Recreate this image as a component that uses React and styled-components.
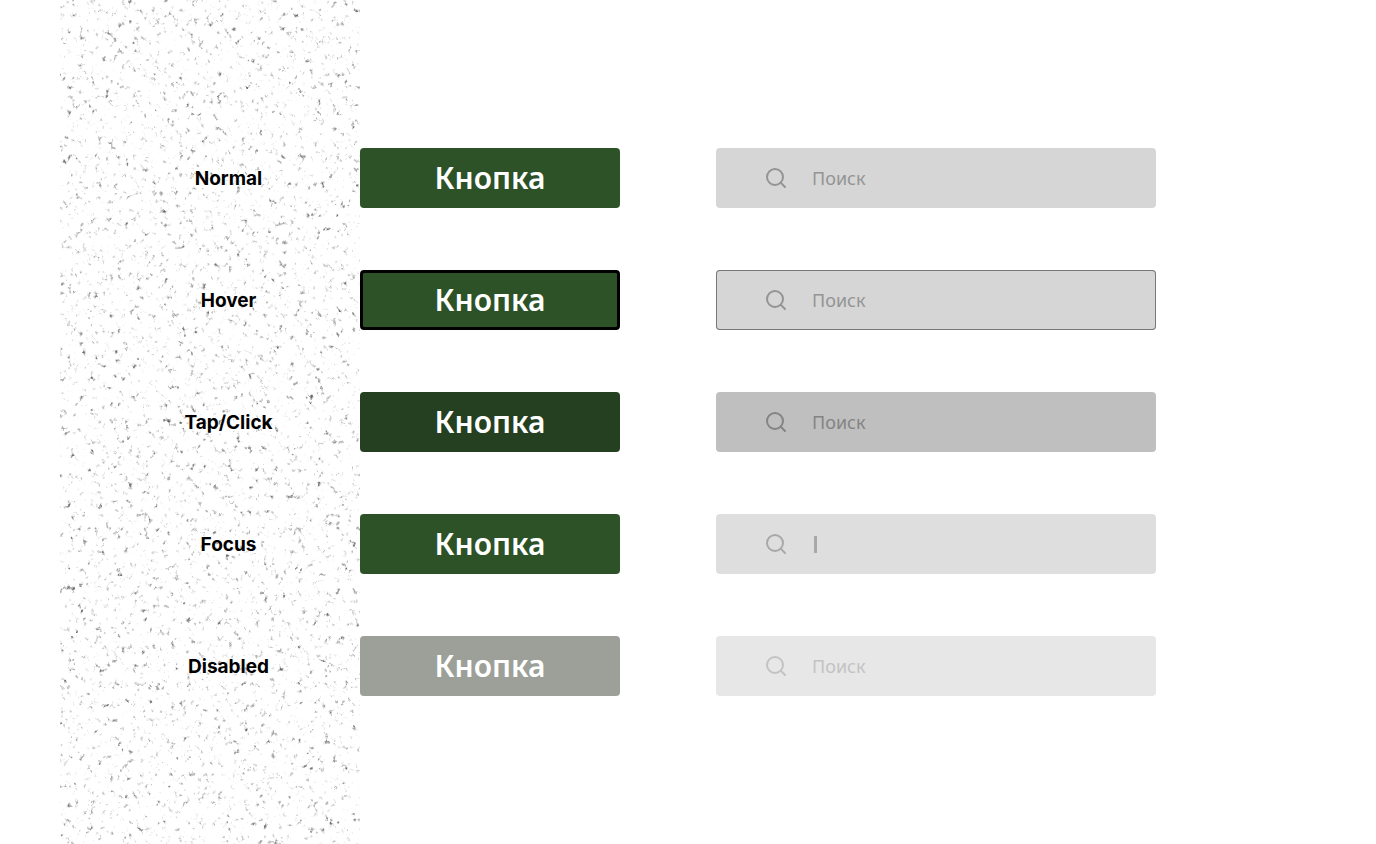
import styled, { createGlobalStyle, ThemeProvider } from 'styled-components';
import React from 'react';
import { Search } from 'lucide-react';

const theme = {
  font: "'Noto Sans', 'Open Sans', sans-serif",
  labelFont: "Inter, 'Liberation Sans', sans-serif",
  states: {
    normal: { button: '#2d5228', field: '#d6d6d6', ink: '#949494' },
    hover: { button: '#2d5228', field: '#d6d6d6', ink: '#949494' },
    active: { button: '#253f21', field: '#bfbfbf', ink: '#848484' },
    focus: { button: '#2d5228', field: '#dedede', ink: '#a8a8a8' },
    disabled: { button: '#9ca099', field: '#e7e7e7', ink: '#c3c3c3' },
  },
};

const rows = [
  { state: 'normal', title: 'Normal' },
  { state: 'hover', title: 'Hover' },
  { state: 'active', title: 'Tap/Click' },
  { state: 'focus', title: 'Focus' },
  { state: 'disabled', title: 'Disabled' },
];

const GlobalStyle = createGlobalStyle`
  *, *::before, *::after {
    box-sizing: border-box;
  }

  body {
    margin: 0;
    background-color: #fff;
  }
`;

// Fine grain, kept only where a second, coarser noise lets it through
const Speckles = () => (
  <Texture aria-hidden="true">
    <filter
      id="speckles"
      x="0"
      y="0"
      width="100%"
      height="100%"
      colorInterpolationFilters="sRGB"
    >
      <feTurbulence
        type="fractalNoise"
        baseFrequency="0.26 0.22"
        numOctaves="3"
        seed="7"
      />
      <feColorMatrix
        type="matrix"
        values="0 0 0 0 0.4  0 0 0 0 0.4  0 0 0 0 0.4  3.8 0 0 0 -2.06"
        result="grain"
      />
      <feTurbulence
        type="fractalNoise"
        baseFrequency="0.11"
        numOctaves="3"
        seed="23"
      />
      <feColorMatrix
        type="matrix"
        values="0 0 0 0 0  0 0 0 0 0  0 0 0 0 0  0 4 0 0 -1.9"
        result="clumps"
      />
      <feComposite in="grain" in2="clumps" operator="in" />
    </filter>
    <rect width="100%" height="100%" filter="url(#speckles)" />
  </Texture>
);

const SearchField = ({ state }) => (
  <Field $state={state}>
    <Search size={24} strokeWidth={2} aria-hidden="true" />
    {state === 'focus' && <Caret />}
    <FieldInput
      type="text"
      aria-label="Поиск"
      placeholder={state === 'focus' ? '' : 'Поиск'}
      disabled={state === 'disabled'}
    />
  </Field>
);

const App = () => (
  <ThemeProvider theme={theme}>
    <GlobalStyle />
    <Page>
      <Speckles />
      <StateList>
        {rows.map(({ state, title }) => (
          <StateRow key={state}>
            <StateLabel htmlFor={`button-${state}`}>{title}</StateLabel>
            <Button
              id={`button-${state}`}
              type="button"
              $state={state}
              disabled={state === 'disabled'}
            >
              Кнопка
            </Button>
            <SearchField state={state} />
          </StateRow>
        ))}
      </StateList>
    </Page>
  </ThemeProvider>
);

const Page = styled.main`
  position: relative;
  min-height: 100vh;
  padding: 148px 60px;
`;

const Texture = styled.svg`
  position: absolute;
  top: 0;
  left: 60px;
  width: 300px;
  height: 100%;
`;

const StateList = styled.div`
  position: relative;
  display: flex;
  flex-direction: column;
  gap: 62px;
`;

const StateRow = styled.div`
  display: grid;
  grid-template-columns: 300px 260px minmax(0, 536px);
  align-items: center;
`;

const StateLabel = styled.label`
  padding-left: 37px;
  font-family: ${(props) => props.theme.labelFont};
  font-size: 19px;
  font-weight: 700;
  line-height: 25px;
  text-align: center;
  color: #000;
`;

const Button = styled.button`
  height: 60px;
  padding: 0;
  border: ${(props) => (props.$state === 'hover' ? '3px solid #000' : 'none')};
  border-radius: 4px;
  background-color: ${(props) => props.theme.states[props.$state].button};
  font-family: ${(props) => props.theme.font};
  font-size: 30px;
  font-weight: 600;
  line-height: 40px;
  color: #fff;
`;

const Field = styled.div`
  display: flex;
  align-items: center;
  height: 60px;
  margin-left: 96px;
  padding: 0 48px;
  border-radius: 4px;
  background-color: ${(props) => props.theme.states[props.$state].field};
  box-shadow: ${(props) =>
    props.$state === 'hover' ? 'inset 0 0 0 1px #777' : 'none'};
  color: ${(props) => props.theme.states[props.$state].ink};

  svg {
    flex: none;
    margin-right: 24px;
  }
`;

const Caret = styled.span`
  flex: none;
  width: 3px;
  height: 17px;
  margin-left: 2px;
  background-color: currentColor;
`;

const FieldInput = styled.input`
  flex: 1;
  min-width: 0;
  padding: 0;
  border: none;
  outline: none;
  background: none;
  font-family: ${(props) => props.theme.font};
  font-size: 18px;
  line-height: 24px;
  color: inherit;

  &::placeholder {
    color: inherit;
    opacity: 1;
  }
`;

export default App;
